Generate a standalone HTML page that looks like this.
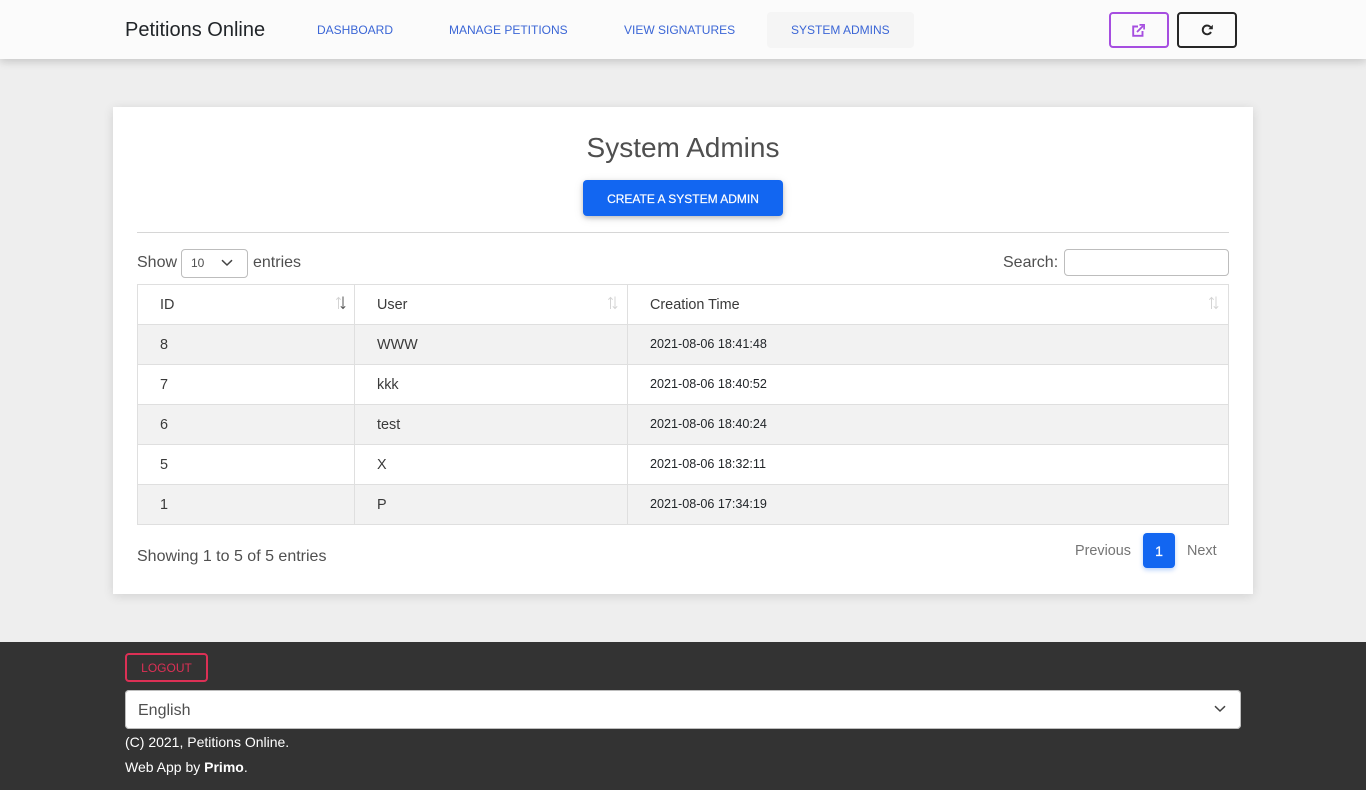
<!DOCTYPE html>
<html lang="en">
<head>
<meta charset="utf-8">
<title>System Admins</title>
<style>
html,body{margin:0;padding:0}
body{width:1366px;height:790px;overflow:hidden;position:relative;background:#eee;font-family:"Liberation Sans",Arial,sans-serif;color:#4f4f4f;font-size:16px}
.a{position:absolute;white-space:nowrap}
#nav{left:0;top:0;width:1366px;height:59px;background:#fbfbfb;box-shadow:0 2px 10px rgba(0,0,0,.12),0 4px 6px rgba(0,0,0,.05)}
.n{font-size:12px;color:#3b66d6;line-height:14px;top:23px}
#card{left:113px;top:107px;width:1140px;height:487px;background:#fff;box-shadow:0 2px 10px rgba(0,0,0,.12)}
.t{position:absolute;white-space:nowrap;color:#212529}
#foot{left:0;top:642px;width:1366px;height:148px;background:#333}
</style>
</head>
<body>
<div class="a" id="nav"></div>
<div class="a" style="left:125px;top:18px;font-size:20px;line-height:24px;color:#212529">Petitions Online</div>
<div class="a n" style="left:317px">DASHBOARD</div>
<div class="a n" style="left:449px">MANAGE PETITIONS</div>
<div class="a n" style="left:624px">VIEW SIGNATURES</div>
<div class="a" style="left:767px;top:12px;width:147px;height:36px;background:#f5f5f5;border-radius:4px"></div>
<div class="a n" style="left:791px">SYSTEM ADMINS</div>

<div class="a" style="left:1109px;top:12px;width:60px;height:36px;box-sizing:border-box;border:2px solid #a64ee0;border-radius:4px"></div>
<svg class="a" style="left:1132px;top:24px" width="13" height="13" viewBox="0 0 13 13" fill="none" stroke="#a64ee0" stroke-width="1.9"><path d="M6 2.5H1.2V11.8H10.5V7"/><path d="M5 8L11 2"/><path d="M7.5 .9H12.1V5.5" stroke-width="1.7"/></svg>
<div class="a" style="left:1177px;top:12px;width:60px;height:36px;box-sizing:border-box;border:2px solid #262626;border-radius:4px"></div>
<svg class="a" style="left:1201px;top:24px" width="12" height="12" viewBox="0 0 12 12" fill="none"><path d="M9.6 3.2A4.4 4.4 0 1 0 10 8" stroke="#262626" stroke-width="1.9"/><path d="M11.8 .7V5.2H7.3Z" fill="#262626"/></svg>

<div class="a" id="card"></div>
<div class="a" style="left:113px;width:1140px;top:131px;text-align:center;font-size:28px;line-height:34px;color:#4f4f4f">System Admins</div>
<div class="a" style="left:583px;top:180px;width:200px;height:36px;background:#1266f1;border-radius:4px;box-shadow:0 2px 5px rgba(0,0,0,.2),0 2px 10px rgba(0,0,0,.1);color:#fff;font-size:12px;font-weight:400;text-align:center;line-height:38px;-webkit-text-stroke:.2px #fff">CREATE A SYSTEM ADMIN</div>
<div class="a" style="left:137px;top:232px;width:1092px;height:1px;background:#d6d6d6"></div>

<div class="a" style="left:137px;top:253px;line-height:19px">Show</div>
<div class="a" style="left:181px;top:249px;width:67px;height:29px;box-sizing:border-box;border:1px solid #bdbdbd;border-radius:4px;background:#fff"></div>
<div class="a" style="left:191px;top:256px;font-size:12px;line-height:14px">10</div>
<svg class="a" style="left:221px;top:259px" width="12" height="8" viewBox="0 0 12 8" fill="none" stroke="#444" stroke-width="1.5"><path d="M1 1.2L6 6L11 1.2"/></svg>
<div class="a" style="left:253px;top:253px;line-height:19px">entries</div>
<div class="a" style="left:1003px;top:253px;line-height:19px">Search:</div>
<div class="a" style="left:1064px;top:249px;width:165px;height:27px;box-sizing:border-box;border:1px solid #bdbdbd;border-radius:4px;background:#fff"></div>

<div class="a" style="left:137px;top:284px;width:1092px;height:241px;box-sizing:border-box;border-top:1px solid #dfdfdf;border-left:1px solid #dfdfdf;background:#fff"></div>
<div class="a" style="left:138px;top:325px;width:1091px;height:40px;background:#f2f2f2"></div>
<div class="a" style="left:138px;top:405px;width:1091px;height:40px;background:#f2f2f2"></div>
<div class="a" style="left:138px;top:485px;width:1091px;height:40px;background:#f2f2f2"></div>
<div class="a" style="left:138px;top:324px;width:1091px;height:1px;background:#dfdfdf"></div>
<div class="a" style="left:138px;top:364px;width:1091px;height:1px;background:#dfdfdf"></div>
<div class="a" style="left:138px;top:404px;width:1091px;height:1px;background:#dfdfdf"></div>
<div class="a" style="left:138px;top:444px;width:1091px;height:1px;background:#dfdfdf"></div>
<div class="a" style="left:138px;top:484px;width:1091px;height:1px;background:#dfdfdf"></div>
<div class="a" style="left:138px;top:524px;width:1091px;height:1px;background:#dfdfdf"></div>
<div class="a" style="left:354px;top:285px;width:1px;height:240px;background:#dfdfdf"></div>
<div class="a" style="left:627px;top:285px;width:1px;height:240px;background:#dfdfdf"></div>
<div class="a" style="left:1228px;top:285px;width:1px;height:240px;background:#dfdfdf"></div>

<div class="t" style="left:160px;top:297px;font-size:14.4px;line-height:17px;color:#3a3a3a">ID</div>
<div class="t" style="left:377px;top:297px;font-size:14.4px;line-height:17px;color:#3a3a3a">User</div>
<div class="t" style="left:650px;top:297px;font-size:14.4px;line-height:17px;color:#3a3a3a">Creation Time</div>

<svg class="a" style="left:335px;top:296px" width="12" height="14" viewBox="0 0 12 14" fill="none" stroke-width="1"><path d="M3.5 13V1.5M1.3 3.7L3.5 1.5L5.7 3.7" stroke="#d4d4d4"/><path d="M8 .5V12.5M5.8 10.3L8 12.5L10.2 10.3" stroke="#555"/></svg>
<svg class="a" style="left:607px;top:296px" width="12" height="14" viewBox="0 0 12 14" fill="none" stroke="#d4d4d4" stroke-width="1"><path d="M3.5 13V1.5M1.3 3.7L3.5 1.5L5.7 3.7"/><path d="M8 .5V12.5M5.8 10.3L8 12.5L10.2 10.3"/></svg>
<svg class="a" style="left:1208px;top:296px" width="12" height="14" viewBox="0 0 12 14" fill="none" stroke="#d4d4d4" stroke-width="1"><path d="M3.5 13V1.5M1.3 3.7L3.5 1.5L5.7 3.7"/><path d="M8 .5V12.5M5.8 10.3L8 12.5L10.2 10.3"/></svg>

<div class="t" style="left:160px;top:337px;font-size:14.4px;line-height:17px;color:#3a3a3a">8</div>
<div class="t" style="left:377px;top:337px;font-size:14.4px;line-height:17px;color:#3a3a3a">WWW</div>
<div class="t" style="left:650px;top:337px;font-size:12.6px;line-height:15px">2021-08-06 18:41:48</div>
<div class="t" style="left:160px;top:377px;font-size:14.4px;line-height:17px;color:#3a3a3a">7</div>
<div class="t" style="left:377px;top:377px;font-size:14.4px;line-height:17px;color:#3a3a3a">kkk</div>
<div class="t" style="left:650px;top:377px;font-size:12.6px;line-height:15px">2021-08-06 18:40:52</div>
<div class="t" style="left:160px;top:417px;font-size:14.4px;line-height:17px;color:#3a3a3a">6</div>
<div class="t" style="left:377px;top:417px;font-size:14.4px;line-height:17px;color:#3a3a3a">test</div>
<div class="t" style="left:650px;top:417px;font-size:12.6px;line-height:15px">2021-08-06 18:40:24</div>
<div class="t" style="left:160px;top:457px;font-size:14.4px;line-height:17px;color:#3a3a3a">5</div>
<div class="t" style="left:377px;top:457px;font-size:14.4px;line-height:17px;color:#3a3a3a">X</div>
<div class="t" style="left:650px;top:457px;font-size:12.6px;line-height:15px">2021-08-06 18:32:11</div>
<div class="t" style="left:160px;top:497px;font-size:14.4px;line-height:17px;color:#3a3a3a">1</div>
<div class="t" style="left:377px;top:497px;font-size:14.4px;line-height:17px;color:#3a3a3a">P</div>
<div class="t" style="left:650px;top:497px;font-size:12.6px;line-height:15px">2021-08-06 17:34:19</div>

<div class="a" style="left:137px;top:547px;line-height:19px">Showing 1 to 5 of 5 entries</div>
<div class="a" style="left:1075px;top:543px;font-size:14.4px;line-height:17px;color:#757575">Previous</div>
<div class="a" style="left:1143px;top:533px;width:32px;height:35px;background:#1266f1;border-radius:4px;box-shadow:0 2px 5px rgba(18,102,241,.3);color:#fff;font-size:14px;font-weight:400;-webkit-text-stroke:.3px #fff;text-align:center;line-height:36px">1</div>
<div class="a" style="left:1187px;top:543px;font-size:14.4px;line-height:17px;color:#757575">Next</div>

<div class="a" id="foot"></div>
<div class="a" style="left:125px;top:653px;width:83px;height:29px;box-sizing:border-box;border:2px solid #dc3055;border-radius:4px;color:#dc3055;font-size:12px;text-align:center;line-height:26px">LOGOUT</div>
<div class="a" style="left:125px;top:690px;width:1116px;height:39px;background:#fff;border-radius:4px;box-shadow:inset 0 0 0 1px #bdbdbd"></div>
<div class="a" style="left:138px;top:701px;line-height:19px;color:#4f4f4f">English</div>
<svg class="a" style="left:1214px;top:705px" width="12" height="8" viewBox="0 0 12 8" fill="none" stroke="#444" stroke-width="1.5"><path d="M1 1.2L6 6L11 1.2"/></svg>
<div class="a" style="left:125px;top:734px;font-size:14px;line-height:17px;color:#fff">(C) 2021, Petitions Online.</div>
<div class="a" style="left:125px;top:759px;font-size:14px;line-height:17px;color:#fff">Web App by <b>Primo</b>.</div>
</body>
</html>
